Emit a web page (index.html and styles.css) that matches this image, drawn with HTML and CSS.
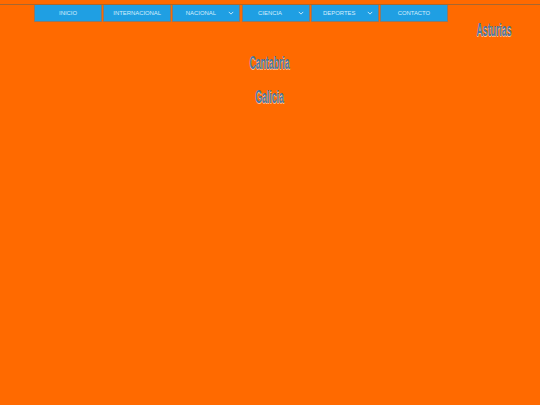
FILE: index.html
```html
<!DOCTYPE html>
<html lang="es">
<head>
<meta charset="utf-8">
<title>Noticias</title>
<link rel="stylesheet" href="styles.css">
</head>
<body>
<header class="top">
  <nav class="menu">
    <a class="item" href="#">INICIO</a>
    <a class="item" href="#">INTERNACIONAL</a>
    <a class="item has-sub" href="#">NACIONAL<svg class="chev" viewBox="0 0 8 5"><path d="M1 1l3 3 3-3"/></svg></a>
    <a class="item has-sub" href="#">CIENCIA<svg class="chev" viewBox="0 0 8 5"><path d="M1 1l3 3 3-3"/></svg></a>
    <a class="item has-sub" href="#">DEPORTES<svg class="chev" viewBox="0 0 8 5"><path d="M1 1l3 3 3-3"/></svg></a>
    <a class="item" href="#">CONTACTO</a>
  </nav>
</header>
<main class="regions">
  <h2 class="region region-right"><span>Asturias</span></h2>
  <h2 class="region"><span>Cantabria</span></h2>
  <h2 class="region"><span>Galicia</span></h2>
</main>
</body>
</html>
```
FILE: styles.css
```css
html, body { margin: 0; padding: 0; }
body {
  background: #ff6a00;
  min-height: 405px;
  font-family: "Liberation Sans", Arial, sans-serif;
  overflow: hidden;
}
.top {
  margin-top: 4px;
  border-top: 1px solid #a8672f;
  padding-left: 34px;
}
.menu { display: flex; gap: 1.2px; }
.item {
  position: relative;
  width: 68px;
  height: 17px;
  box-sizing: border-box;
  background: #1f9fe3;
  border-left: 1px solid #8a7a6a;
  border-right: 1px solid #8a7a6a;
  border-bottom: 1px solid #8a7a6a;
  color: #d6eefb;
  font-size: 5.9px;
  line-height: 17px;
  text-align: center;
  text-decoration: none;
}
.has-sub { padding-right: 11px; }
.chev {
  position: absolute;
  right: 5px;
  top: 6px;
  width: 6px;
  height: 4px;
  fill: none;
  stroke: #d6eefb;
  stroke-width: 1.2;
}
.regions { display: flex; flex-direction: column; }
.region {
  margin: 0;
  height: 33.5px;
  line-height: 34px;
  text-align: center;
  font-size: 18px;
  font-weight: bold;
  color: #4a78a2;
  text-shadow: 1px 1px 0 rgba(255, 255, 255, 0.6);
}
.region span { display: inline-block; transform: scaleX(0.485); }
.region-right {
  text-align: right;
  padding-right: 10px;
  height: 16px;
  line-height: 16px;
  margin-bottom: 8px;
}
```
